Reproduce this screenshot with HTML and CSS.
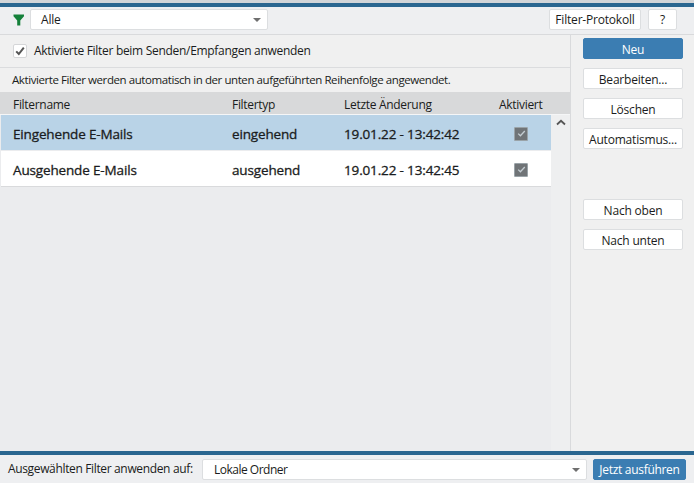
FILE: index.html
```html
<!DOCTYPE html>
<html lang="de">
<head>
<meta charset="utf-8">
<title>Filter</title>
<link rel="stylesheet" href="styles.css">
</head>
<body>
<div class="app">
  <div class="topline"></div>
  <header class="toolbar">
    <svg class="funnel" width="12" height="12" viewBox="0 0 12 12"><path d="M0.5 0.5H11V2.2L7.3 6.4V11.5H4.2V6.4L0.5 2.2Z" fill="#14803a"/></svg>
    <div class="select select-top"><span>Alle</span><i class="caret"></i></div>
    <div class="spacer"></div>
    <button class="btn btn-log">Filter-Protokoll</button>
    <button class="btn btn-help">?</button>
  </header>
  <div class="main">
    <section class="left">
      <div class="checkrow">
        <span class="checkbox"><svg width="10" height="10" viewBox="0 0 10 10"><path d="M1.2 5.4L3.8 8L8.8 1.6" fill="none" stroke="#555" stroke-width="2"/></svg></span>
        <span>Aktivierte Filter beim Senden/Empfangen anwenden</span>
      </div>
      <div class="inforow">Aktivierte Filter werden automatisch in der unten aufgeführten Reihenfolge angewendet.</div>
      <div class="table">
        <div class="thead">
          <span class="c1">Filtername</span><span class="c2">Filtertyp</span><span class="c3">Letzte Änderung</span><span class="c4">Aktiviert</span>
        </div>
        <div class="tbody">
          <div class="rows">
            <div class="row row-sel">
              <span class="c1">Eingehende E-Mails</span><span class="c2">eingehend</span><span class="c3">19.01.22 - 13:42:42</span>
              <span class="c4"><span class="minicheck"><svg width="9" height="9" viewBox="0 0 9 9"><path d="M1.2 4.6L3.4 6.8L7.8 2" fill="none" stroke="#c4cdd2" stroke-width="1.3"/></svg></span></span>
            </div>
            <div class="row row-plain">
              <span class="c1">Ausgehende E-Mails</span><span class="c2">ausgehend</span><span class="c3">19.01.22 - 13:42:45</span>
              <span class="c4"><span class="minicheck"><svg width="9" height="9" viewBox="0 0 9 9"><path d="M1.2 4.6L3.4 6.8L7.8 2" fill="none" stroke="#c4cdd2" stroke-width="1.3"/></svg></span></span>
            </div>
          </div>
          <div class="scrollbar"><svg width="10" height="7" viewBox="0 0 10 7"><path d="M1 5.5L5 1.8L9 5.5" fill="none" stroke="#555" stroke-width="1.8"/></svg></div>
        </div>
      </div>
    </section>
    <aside class="right">
      <button class="btn btn-side btn-primary">Neu</button>
      <button class="btn btn-side">Bearbeiten...</button>
      <button class="btn btn-side">Löschen</button>
      <button class="btn btn-side">Automatismus...</button>
      <button class="btn btn-side btn-up">Nach oben</button>
      <button class="btn btn-side">Nach unten</button>
    </aside>
  </div>
  <footer class="footer">
    <span class="footlabel">Ausgewählten Filter anwenden auf:</span>
    <div class="select select-bottom"><span>Lokale Ordner</span><i class="caret"></i></div>
    <button class="btn btn-run">Jetzt ausführen</button>
  </footer>
</div>
</body>
</html>
```
FILE: styles.css
```css
* { box-sizing: border-box; }
html, body { margin: 0; padding: 0; height: 100%; }
body { font: 12px/16px "Open Sans", "Noto Sans", sans-serif; color: #1a1c20; background: #f0f0f0; overflow: hidden; letter-spacing: -0.2px; }
.app { width: 694px; height: 483px; display: flex; flex-direction: column; }
.topline { height: 7px; background: #2a6690; border-top: 3px solid #d2d5d8; flex: none; }
.toolbar { height: 28px; flex: none; display: flex; align-items: center; background: #eeeff1; border-bottom: 1px solid #d9dadc; padding: 0 17px 3px 13px; }
.funnel { flex: none; margin-right: 5px; margin-top: 2px; }
.select { background: #fff; border: 1px solid #dcdee0; border-radius: 2px; display: flex; align-items: center; justify-content: space-between; }
.select-top { width: 238px; height: 21px; padding: 2px 6px 0 10px; }
.caret { width: 0; height: 0; border-left: 4px solid transparent; border-right: 4px solid transparent; border-top: 4px solid #6f6f6f; }
.spacer { flex: 1; }
.btn { font: inherit; letter-spacing: inherit; color: #1a1c20; background: #fff; border: 1px solid #dcdee0; border-radius: 2px; padding: 2px 0 0; text-align: center; }
.btn-log { width: 92px; height: 21px; margin-right: 7px; }
.btn-help { width: 29px; height: 21px; }
.main { flex: 1; min-height: 0; display: flex; }
.left { width: 571px; flex: none; display: flex; flex-direction: column; border-right: 1px solid #d9dadc; }
.checkrow { height: 33px; flex: none; display: flex; align-items: center; gap: 7px; padding: 0 13px 1px; border-bottom: 1px solid #dbdcde; letter-spacing: -0.3px; }
.checkbox { width: 14px; height: 14px; background: #fff; border: 1px solid #d5d6d8; border-radius: 2px; display: flex; align-items: center; justify-content: center; }
.inforow { height: 24px; flex: none; padding: 4px 12px 0; font-size: 11.5px; letter-spacing: -0.42px; }
.table { flex: 1; min-height: 0; display: flex; flex-direction: column; }
.thead { height: 22px; flex: none; display: flex; align-items: center; background: #d8d9da; padding-top: 3px; letter-spacing: -0.3px; }
.tbody { flex: 1; min-height: 0; display: flex; background: #ebecee; border-top: 1px solid #f5f6f7; }
.rows { width: 551px; flex: none; }
.row { display: flex; align-items: center; font-size: 13.5px; -webkit-text-stroke: 0.3px currentColor; letter-spacing: -0.15px; }
.row-sel { height: 35px; background: #b9d3e7; margin-left: 1px; margin-bottom: 1px; padding-top: 2px; }
.row-plain { height: 36px; background: #fff; margin-left: 1px; border-bottom: 1px solid #d9dadc; padding-top: 2px; }
.row .c1 { width: 231px; padding-left: 12px; }
.c1 { width: 232px; padding-left: 13px; flex: none; }
.c2 { width: 112px; flex: none; }
.c3 { width: 155px; flex: none; }
.c4 { width: 44px; flex: none; }
.row .c4 { display: flex; justify-content: center; }
.minicheck { width: 14px; height: 14px; background: #707477; border: 1px solid #9aa3a8; border-radius: 1px; display: flex; align-items: center; justify-content: center; }
.scrollbar { width: 19px; flex: none; background: #eeeff0; display: flex; justify-content: center; padding-top: 4px; }
.right { flex: 1; display: flex; flex-direction: column; align-items: flex-start; gap: 9px; padding: 3px 11px 0 12px; }
.btn-side { width: 100px; height: 21px; flex: none; }
.btn-primary { background: #3b7db2; border-color: #3b7db2; color: #fff; }
.btn-up { margin-top: 41px; }
.footer { height: 32px; flex: none; display: flex; align-items: center; background: #eeeff1; border-top: 4px solid #2a6690; padding: 0 8px; }
.footlabel { width: 194px; flex: none; letter-spacing: -0.35px; }
.select-bottom { width: 385px; height: 21px; padding: 1px 6px 0 11px; letter-spacing: -0.5px; }
.btn-run { width: 93px; height: 21px; margin-left: 6px; background: #3b7db2; border-color: #3b7db2; color: #fff; letter-spacing: -0.3px; }
```
